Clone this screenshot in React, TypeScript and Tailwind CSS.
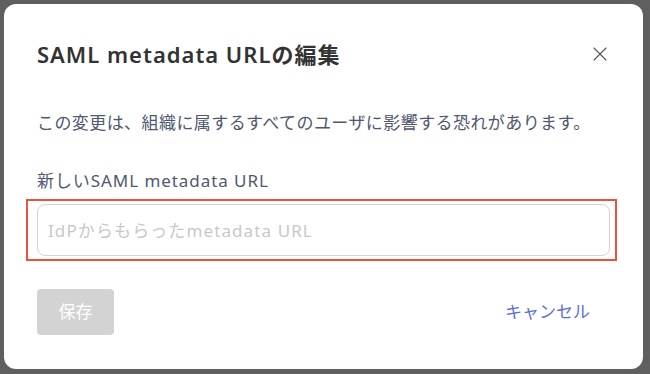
import { X } from "lucide-react";

const font = { fontFamily: '"Noto Sans", "Noto Sans CJK JP", sans-serif' };

export default function App() {
  return (
    <div className="w-[650px] h-[374px] bg-[#5f5f5f] p-1" style={font}>
      <div className="w-[639px] h-[365px] bg-white rounded-xl px-[33px] pt-9 pb-[34px] flex flex-col">
        <div className="flex items-center justify-between h-7">
          <h2 className="text-[22px] leading-7 font-semibold text-[#333333] tracking-[0.045em]">
            SAML metadata URLの編集
          </h2>
          <button className="text-[#555] -mr-[2px]">
            <X className="w-6 h-6" strokeWidth={1.1} />
          </button>
        </div>

        <p className="mt-[43px] text-[17px] leading-6 text-[#4f5870] tracking-[0.025em]">
          この変更は、組織に属するすべてのユーザに影響する恐れがあります。
        </p>

        <label className="mt-[34px] text-[17px] leading-6 text-[#4f5870] tracking-[0.055em]">
          新しいSAML metadata URL
        </label>

        <div className="mt-[6px] -ml-[11px] -mr-[7px] border-2 border-[#e8533a] pl-[9px] pr-[5px] py-[3px]">
          <input
            className="w-full h-[52px] rounded-lg border border-[#d4d4d4] px-2.5 text-[17px] tracking-[0.065em] outline-none placeholder:text-[#c8c8c8]"
            placeholder="IdPからもらったmetadata URL"
          />
        </div>

        <div className="mt-auto flex items-center justify-between">
          <button className="w-[77px] h-[46px] rounded bg-[#d3d3d3] text-white text-[17px]">保存</button>
          <button className="px-5 text-[17px] text-[#5c6fd6]">キャンセル</button>
        </div>
      </div>
    </div>
  );
}
